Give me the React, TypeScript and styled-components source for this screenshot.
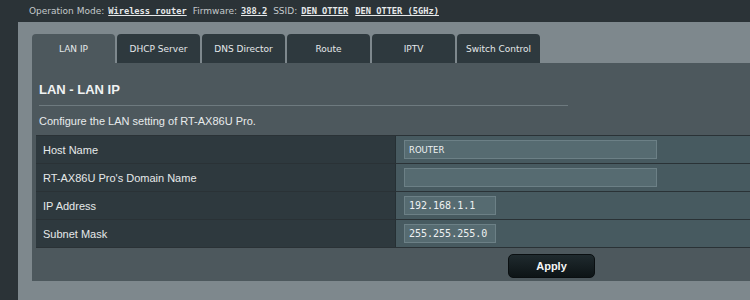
import React from "react";
import styled, { createGlobalStyle } from "styled-components";

const Global = createGlobalStyle`
  html, body { margin: 0; padding: 0; background: #2b3337; }
  body { width: 750px; height: 300px; overflow: hidden; font-family: "DejaVu Sans", Verdana, sans-serif; }
`;

const Page = styled.div`
  display: flex;
  flex-direction: column;
  height: 300px;
  background: #2b3337;
`;

const TopBar = styled.div`
  height: 22px;
  display: flex;
  align-items: center;
  padding-left: 29px;
  font-size: 9px;
  color: #c4c9cb;
  white-space: nowrap;
  gap: 4px;
`;

const TopLabel = styled.span<{ first?: boolean }>`
  margin-left: ${(p) => (p.first ? "0" : "2px")};
`;

const TopValue = styled.span<{ spaced?: boolean }>`
  font-family: "DejaVu Sans Mono", monospace;
  font-weight: bold;
  text-decoration: underline;
  color: #e6e9ea;
  font-size: 8.7px;
  margin-left: ${(p) => (p.spaced ? "3px" : "0")};
`;

const Outer = styled.div`
  flex: 1;
  margin-left: 18px;
  background: #7e888d;
  padding: 12px 0 0 14px;
  display: flex;
  flex-direction: column;
`;

const Tabs = styled.div`
  display: flex;
  gap: 2px;
  height: 29px;
`;

const Tab = styled.div<{ active?: boolean }>`
  width: 83px;
  height: 29px;
  box-sizing: border-box;
  border-radius: 4px 4px 0 0;
  background: ${(p) => (p.active ? "#4d585d" : "#2e393e")};
  color: #e4e8ea;
  font-size: 9px;
  display: flex;
  align-items: center;
  justify-content: center;
  white-space: nowrap;
`;

const Panel = styled.div`
  background: #4d585d;
  height: 218px;
  display: flex;
  flex-direction: column;
  padding: 0 0 0 4px;
`;

const Heading = styled.div`
  font-family: "Liberation Sans", Arial, sans-serif;
  font-weight: bold;
  font-size: 13px;
  color: #f0f2f3;
  margin: 19px 0 0 3px;
  height: 16px;
`;

const Rule = styled.div`
  width: 529px;
  height: 1px;
  background: #6e7a7f;
  margin: 7px 0 0 3px;
`;

const Desc = styled.div`
  font-family: "Liberation Sans", Arial, sans-serif;
  font-size: 11px;
  color: #e8ebec;
  margin: 9px 0 0 3px;
  height: 14px;
`;

const Table = styled.div`
  margin-top: 6px;
  display: flex;
  flex-direction: column;
  border-top: 1px solid #2a3236;
`;

const Row = styled.div`
  display: grid;
  grid-template-columns: 360px 1fr;
  height: 28px;
  border-bottom: 1px solid #2a3236;
  box-sizing: border-box;
`;

const Label = styled.div`
  background: #2e393e;
  color: #e6e9ea;
  font-family: "Liberation Sans", Arial, sans-serif;
  font-size: 11px;
  display: flex;
  align-items: center;
  padding-left: 7px;
  border-right: 1px solid #263034;
`;

const Value = styled.div`
  background: #475a60;
  display: flex;
  align-items: center;
  padding-left: 8px;
`;

const Input = styled.div<{ w: number; mono?: boolean }>`
  width: ${(p) => p.w}px;
  height: 19px;
  box-sizing: border-box;
  background: #566b71;
  border: 1px solid #6c8086;
  color: #eef1f2;
  font-family: ${(p) => (p.mono ? '"DejaVu Sans Mono", monospace' : '"DejaVu Sans", Verdana, sans-serif')};
  font-size: ${(p) => (p.mono ? "10px" : "8.5px")};
  display: flex;
  align-items: center;
  padding-left: 4px;
`;

const Footer = styled.div`
  display: flex;
  padding-left: 472px;
  margin-top: 6px;
`;

const Button = styled.div`
  width: 87px;
  height: 24px;
  border-radius: 5px;
  background: linear-gradient(#1f2a2e, #0d1416);
  border: 1px solid #0a0f11;
  box-sizing: border-box;
  color: #f4f6f7;
  font-family: "Liberation Sans", Arial, sans-serif;
  font-weight: bold;
  font-size: 11px;
  display: flex;
  align-items: center;
  justify-content: center;
`;

const tabs = ["LAN IP", "DHCP Server", "DNS Director", "Route", "IPTV", "Switch Control"];

const rows: { label: string; value: string; w: number; mono?: boolean }[] = [
  { label: "Host Name", value: "ROUTER", w: 253 },
  { label: "RT-AX86U Pro's Domain Name", value: "", w: 253 },
  { label: "IP Address", value: "192.168.1.1", w: 92, mono: true },
  { label: "Subnet Mask", value: "255.255.255.0", w: 92, mono: true },
];

export default function App() {
  return (
    <>
      <Global />
      <Page>
        <TopBar>
          <TopLabel first>Operation Mode:</TopLabel>
          <TopValue>Wireless router</TopValue>
          <TopLabel>Firmware:</TopLabel>
          <TopValue>388.2</TopValue>
          <TopLabel>SSID:</TopLabel>
          <TopValue>DEN OTTER</TopValue>
          <TopValue spaced>DEN OTTER (5GHz)</TopValue>
        </TopBar>
        <Outer>
          <Tabs>
            {tabs.map((t, i) => (
              <Tab key={t} active={i === 0}>{t}</Tab>
            ))}
          </Tabs>
          <Panel>
            <Heading>LAN - LAN IP</Heading>
            <Rule />
            <Desc>Configure the LAN setting of RT-AX86U Pro.</Desc>
            <Table>
              {rows.map((r) => (
                <Row key={r.label}>
                  <Label>{r.label}</Label>
                  <Value>
                    <Input w={r.w} mono={r.mono}>{r.value}</Input>
                  </Value>
                </Row>
              ))}
            </Table>
            <Footer>
              <Button>Apply</Button>
            </Footer>
          </Panel>
        </Outer>
      </Page>
    </>
  );
}
